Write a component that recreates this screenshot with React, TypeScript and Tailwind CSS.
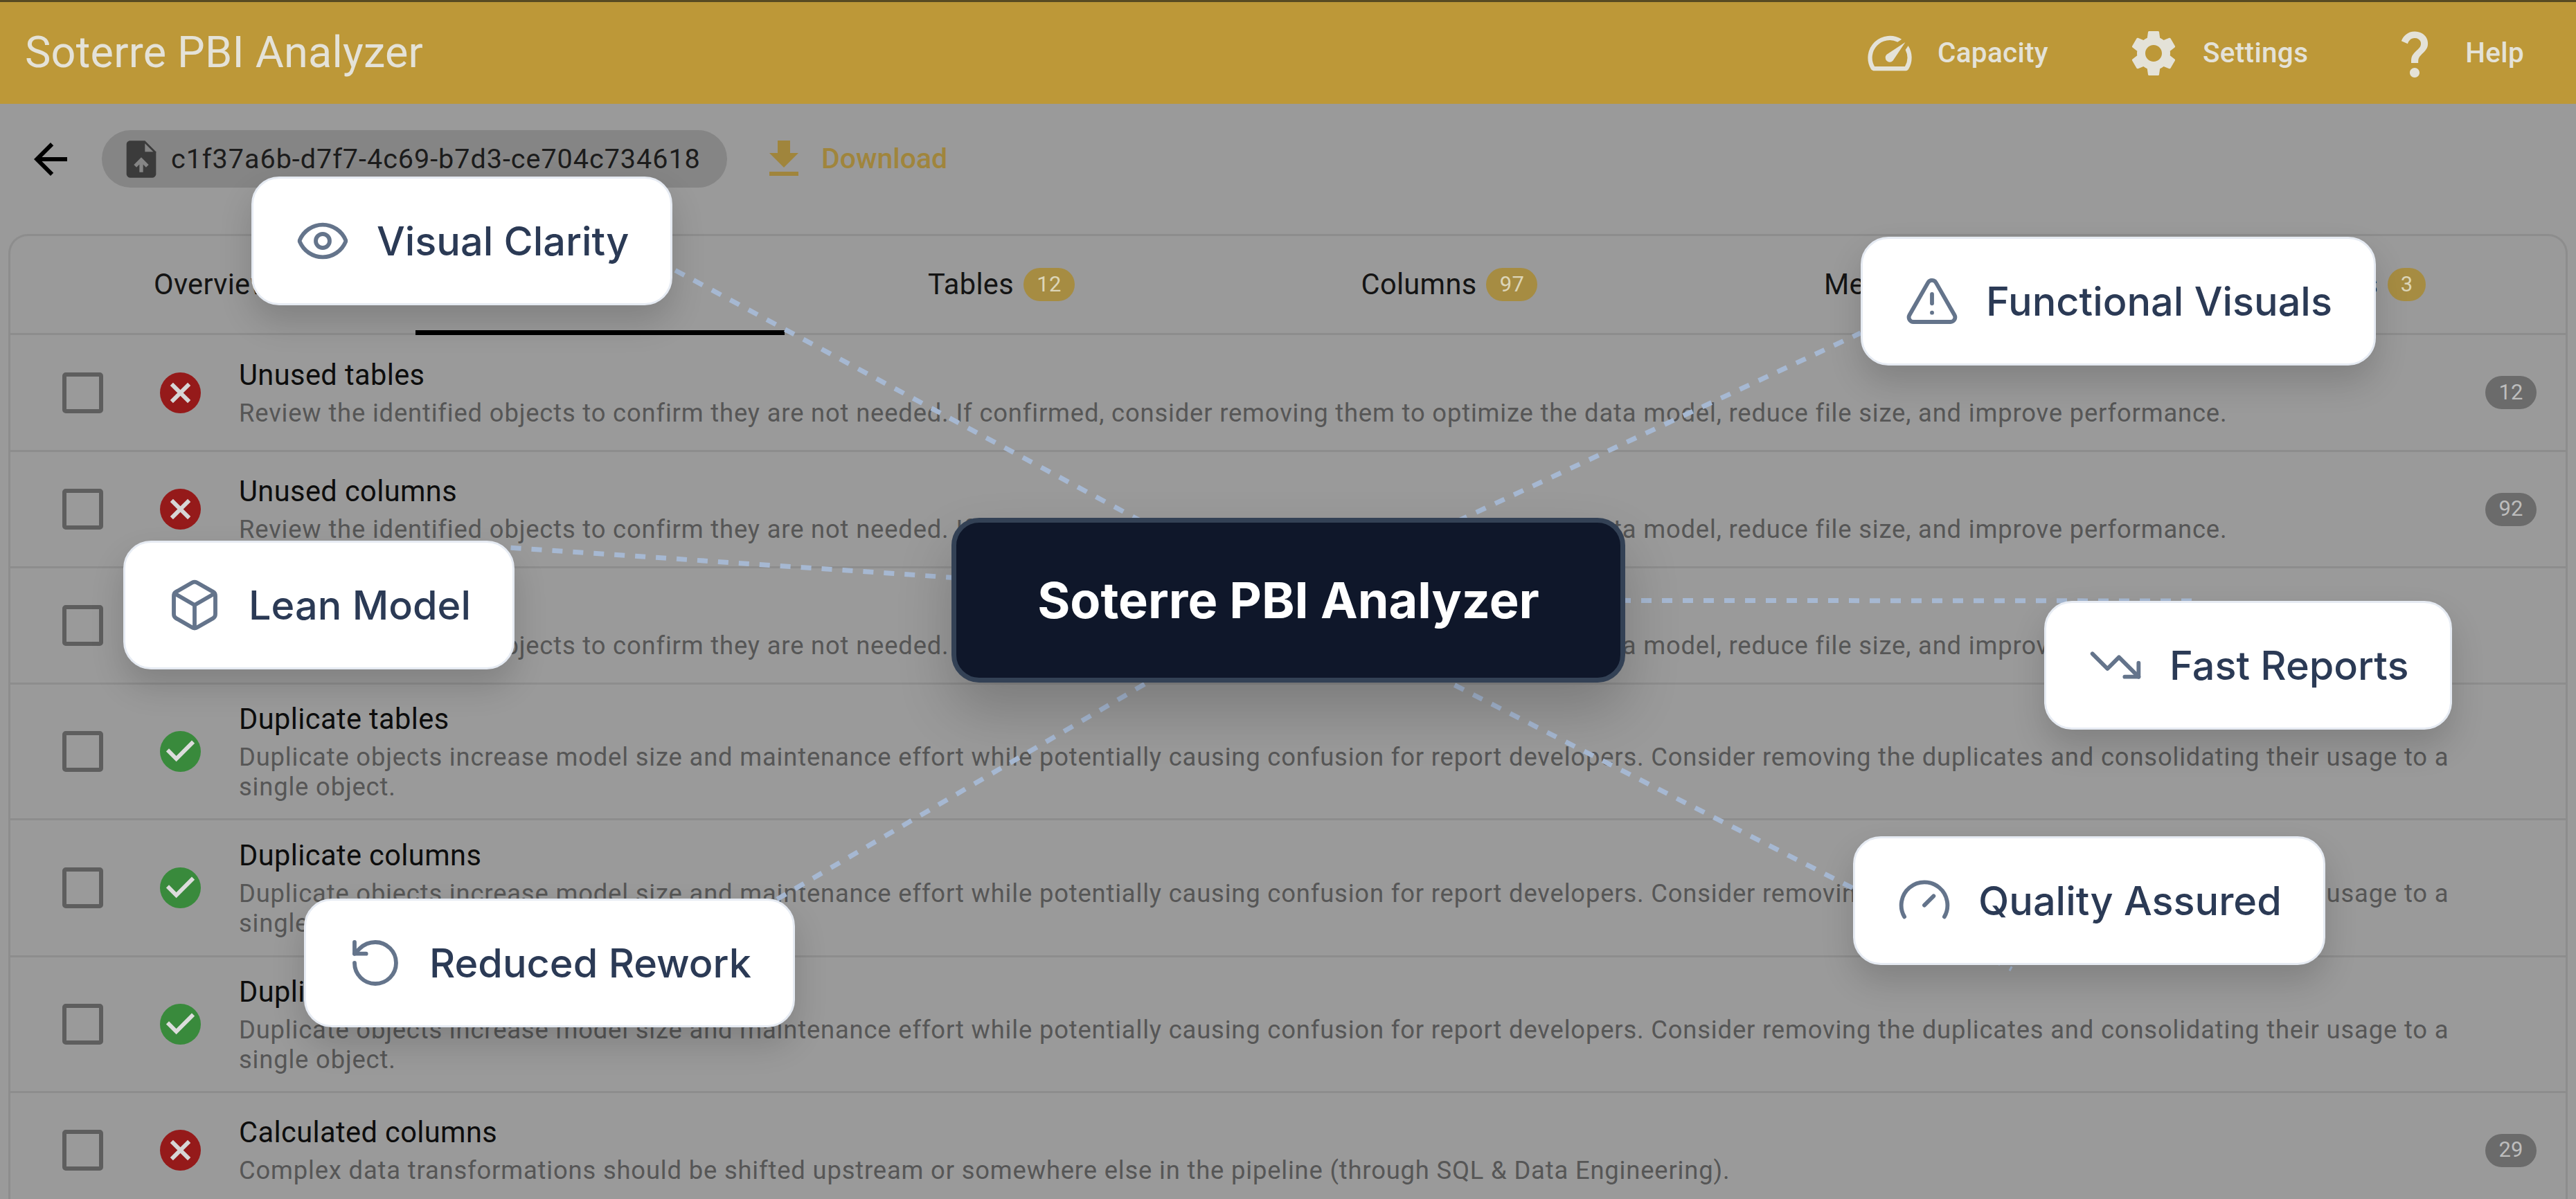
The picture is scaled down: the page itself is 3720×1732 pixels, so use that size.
import { Eye, TriangleAlert, Box, TrendingDown, Gauge, RotateCcw } from "lucide-react";
import { MdArrowBack, MdOutlineSpeed, MdSettings, MdQuestionMark, MdFileDownload } from "react-icons/md";
import type { ReactNode } from "react";

const review = "Review the identified objects to confirm they are not needed. If confirmed, consider removing them to optimize the data model, reduce file size, and improve performance.";
const dup = "Duplicate objects increase model size and maintenance effort while potentially causing confusion for report developers. Consider removing the duplicates and consolidating their usage to a single object.";

const rows = [
  { title: "Unused tables", desc: review, ok: false, count: "12", h: "h-[169px]" },
  { title: "Unused columns", desc: review, ok: false, count: "92", h: "h-[168px]" },
  { title: "Unused measures", desc: review, ok: true, count: "", h: "h-[168px]" },
  { title: "Duplicate tables", desc: dup, ok: true, count: "", h: "h-[196px]" },
  { title: "Duplicate columns", desc: dup, ok: true, count: "", h: "h-[198px]" },
  { title: "Duplicate measures", desc: dup, ok: true, count: "", h: "h-[196px]" },
  { title: "Calculated columns", desc: "Complex data transformations should be shifted upstream or somewhere else in the pipeline (through SQL & Data Engineering).", ok: false, count: "29", h: "h-[168px]" },
];

function Status({ ok }: { ok: boolean }) {
  return (
    <svg viewBox="2 2 20 20" className="w-[59px] h-[59px] shrink-0">
      <circle cx="12" cy="12" r="10" fill={ok ? "#398a3c" : "#951a1a"} />
      {ok ? (
        <path fill="#dcdcdc" d="M10 17l-5-5 1.41-1.41L10 14.17l7.59-7.59L19 8l-9 9z" />
      ) : (
        <path fill="#d6d6d6" d="M17 15.59 15.59 17 12 13.41 8.41 17 7 15.59 10.59 12 7 8.41 8.41 7 12 10.59 15.59 7 17 8.41 13.41 12 17 15.59z" />
      )}
    </svg>
  );
}

function Row({ title, desc, ok, count, h }: { title: string; desc: string; ok: boolean; count: string; h: string }) {
  return (
    <div className={`${h} flex items-center pl-[75px] pr-[42px] border-b-[3px] border-[#8d8d8d]`}>
      <div className="w-[59px] h-[59px] shrink-0 rounded-[5px] border-[6px] border-[#5e5e5e]" />
      <div className="ml-[82px]">
        <Status ok={ok} />
      </div>
      <div className="ml-[55px] w-[3200px] pb-[3px]">
        <div className="text-[41.6px] leading-[56px] text-[#0d0d0d] tracking-[0.39px]">{title}</div>
        <div className="mt-[5px] text-[36.4px] leading-[43px] text-[#565656] tracking-[0.82px]">{desc}</div>
      </div>
      {count && (
        <div className="ml-auto w-[74px] h-[48px] rounded-[24px] bg-[#6b6b6b] text-[#bdbdbd] text-[31px] flex items-center justify-center">
          {count}
        </div>
      )}
    </div>
  );
}

function Tab({ label, count, cls }: { label?: string; count?: string; cls: string }) {
  return (
    <div className={`${cls} flex items-center justify-center gap-[14px] text-[41.6px] text-[#141414] tracking-[0.3px]`}>
      {label && <span>{label}</span>}
      {count && (
        <span className={`${count.length > 1 ? "w-[74px]" : "w-[55px]"} h-[48px] rounded-[24px] bg-[#a68c42] text-[#dcd5b8] text-[31px] flex items-center justify-center`}>
          {count}
        </span>
      )}
    </div>
  );
}

function Node({ cls, icon, label }: { cls: string; icon: ReactNode; label: string }) {
  return (
    <div className={`${cls} absolute h-[186px] pl-[60px] pr-[60px] flex items-center gap-[38px] rounded-[40px] bg-white border-[3px] border-[#e6ebf3] shadow-[0_24px_48px_rgba(0,0,0,0.16)] font-[Inter,sans-serif] font-medium text-[57.6px] text-[#2b3a55] whitespace-nowrap`}>
      <span className="text-[#64748b] shrink-0">{icon}</span>
      <span>{label}</span>
    </div>
  );
}

function NavItem({ icon, label }: { icon: ReactNode; label: string }) {
  return (
    <div className="flex items-center gap-[31px]">
      {icon}
      <span className="text-[40.5px] font-medium tracking-[0.3px]">{label}</span>
    </div>
  );
}

export default function App() {
  return (
    <div className="relative w-[3720px] h-[1732px] overflow-hidden bg-[#9a9a9a] font-[Roboto,sans-serif]">
      <header className="h-[150px] flex items-center justify-between pl-[36px] pr-[75px] bg-[#bd9838] border-t-[3px] border-[#574a22] text-[#e4e2d8]">
        <div className="text-[63px] tracking-[0.2px]">Soterre PBI Analyzer</div>
        <nav className="flex items-center gap-[112px]">
          <NavItem icon={<MdOutlineSpeed className="w-[76px] h-[76px]" />} label="Capacity" />
          <NavItem icon={<MdSettings className="w-[80px] h-[80px]" />} label="Settings" />
          <NavItem icon={<MdQuestionMark className="w-[84px] h-[84px]" />} label="Help" />
        </nav>
      </header>

      <div className="h-[188px] flex items-center pl-[37px] pb-[29px]">
        <MdArrowBack className="w-[72px] h-[72px] text-black" />
        <div className="ml-[38px] h-[83px] w-[903px] rounded-full bg-[#858585] flex items-center pl-[25px] gap-[11px] text-[39.6px] text-[#1c1c1c] tracking-[0.95px]">
          <svg viewBox="0 0 24 24" className="w-[64px] h-[64px] shrink-0">
            <path fill="#3b3b3b" d="M14 2H6c-1.1 0-2 .9-2 2v16c0 1.1.9 2 2 2h12c1.1 0 2-.9 2-2V8l-6-6z" />
            <path fill="#858585" d="M12 11l-4 4 1.41 1.41L11 14.84V19h2v-4.16l1.59 1.59L16 15l-4-4zM14 3.5V8h4.5L14 3.5z" />
          </svg>
          <span>c1f37a6b-d7f7-4c69-b7d3-ce704c734618</span>
        </div>
        <div className="ml-[46px] flex items-center gap-[18px] text-[#a0853c] text-[41px] font-medium">
          <MdFileDownload className="w-[72px] h-[72px]" />
          <span>Download</span>
        </div>
      </div>

      <main className="mx-[12px] border-l-[3px] border-r-[3px] border-t-[3px] border-[#8d8d8d] rounded-t-[28px]">
        <div className="h-[143px] flex border-b-[3px] border-[#8d8d8d]">
          <Tab label="Overview" cls="w-[585px]" />
          <Tab cls="w-[533px] border-b-[7px] border-black -mb-[3px]" />
          <Tab label="Tables" count="12" cls="w-[626px]" />
          <Tab label="Columns" count="97" cls="w-[668px]" />
          <Tab label="Measures" count="0" cls="w-[668px]" />
          <Tab label="Visuals" count="3" cls="w-[610px]" />
        </div>
        {rows.map((r) => (
          <Row key={r.title} {...r} />
        ))}
      </main>

      <svg className="absolute inset-0 w-[3720px] h-[1732px]" viewBox="0 0 3720 1732" fill="none" stroke="#a6b8d2" strokeWidth="7" strokeDasharray="15 15">
        <path d="M1860 867L900 350" />
        <path d="M1860 867L720 790" />
        <path d="M1860 867L2687 481" />
        <path d="M1860 867L3170 868" />
        <path d="M1860 867L2905 1400" />
        <path d="M1860 867L1100 1312" />
      </svg>

      <Node cls="left-[363px] top-[255px]" icon={<Eye className="w-[80px] h-[80px]" strokeWidth={1.75} />} label="Visual Clarity" />
      <Node cls="left-[2687px] top-[342px]" icon={<TriangleAlert className="w-[80px] h-[80px]" strokeWidth={1.75} />} label="Functional Visuals" />
      <Node cls="left-[178px] top-[781px]" icon={<Box className="w-[80px] h-[80px]" strokeWidth={1.75} />} label="Lean Model" />
      <Node cls="left-[2952px] top-[868px]" icon={<TrendingDown className="w-[80px] h-[80px]" strokeWidth={1.75} />} label="Fast Reports" />
      <Node cls="left-[2676px] top-[1208px]" icon={<Gauge className="w-[80px] h-[80px]" strokeWidth={1.75} />} label="Quality Assured" />
      <Node cls="left-[439px] top-[1298px]" icon={<RotateCcw className="w-[80px] h-[80px]" strokeWidth={1.75} />} label="Reduced Rework" />

      <div className="absolute left-[1374px] top-[748px] w-[973px] h-[238px] rounded-[40px] bg-[#0f172a] border-[7px] border-[#334155] shadow-[0_40px_80px_rgba(0,0,0,0.2)] flex items-center justify-center font-[Inter,sans-serif] font-bold text-[72px] text-white whitespace-nowrap">
        Soterre PBI Analyzer
      </div>
    </div>
  );
}
